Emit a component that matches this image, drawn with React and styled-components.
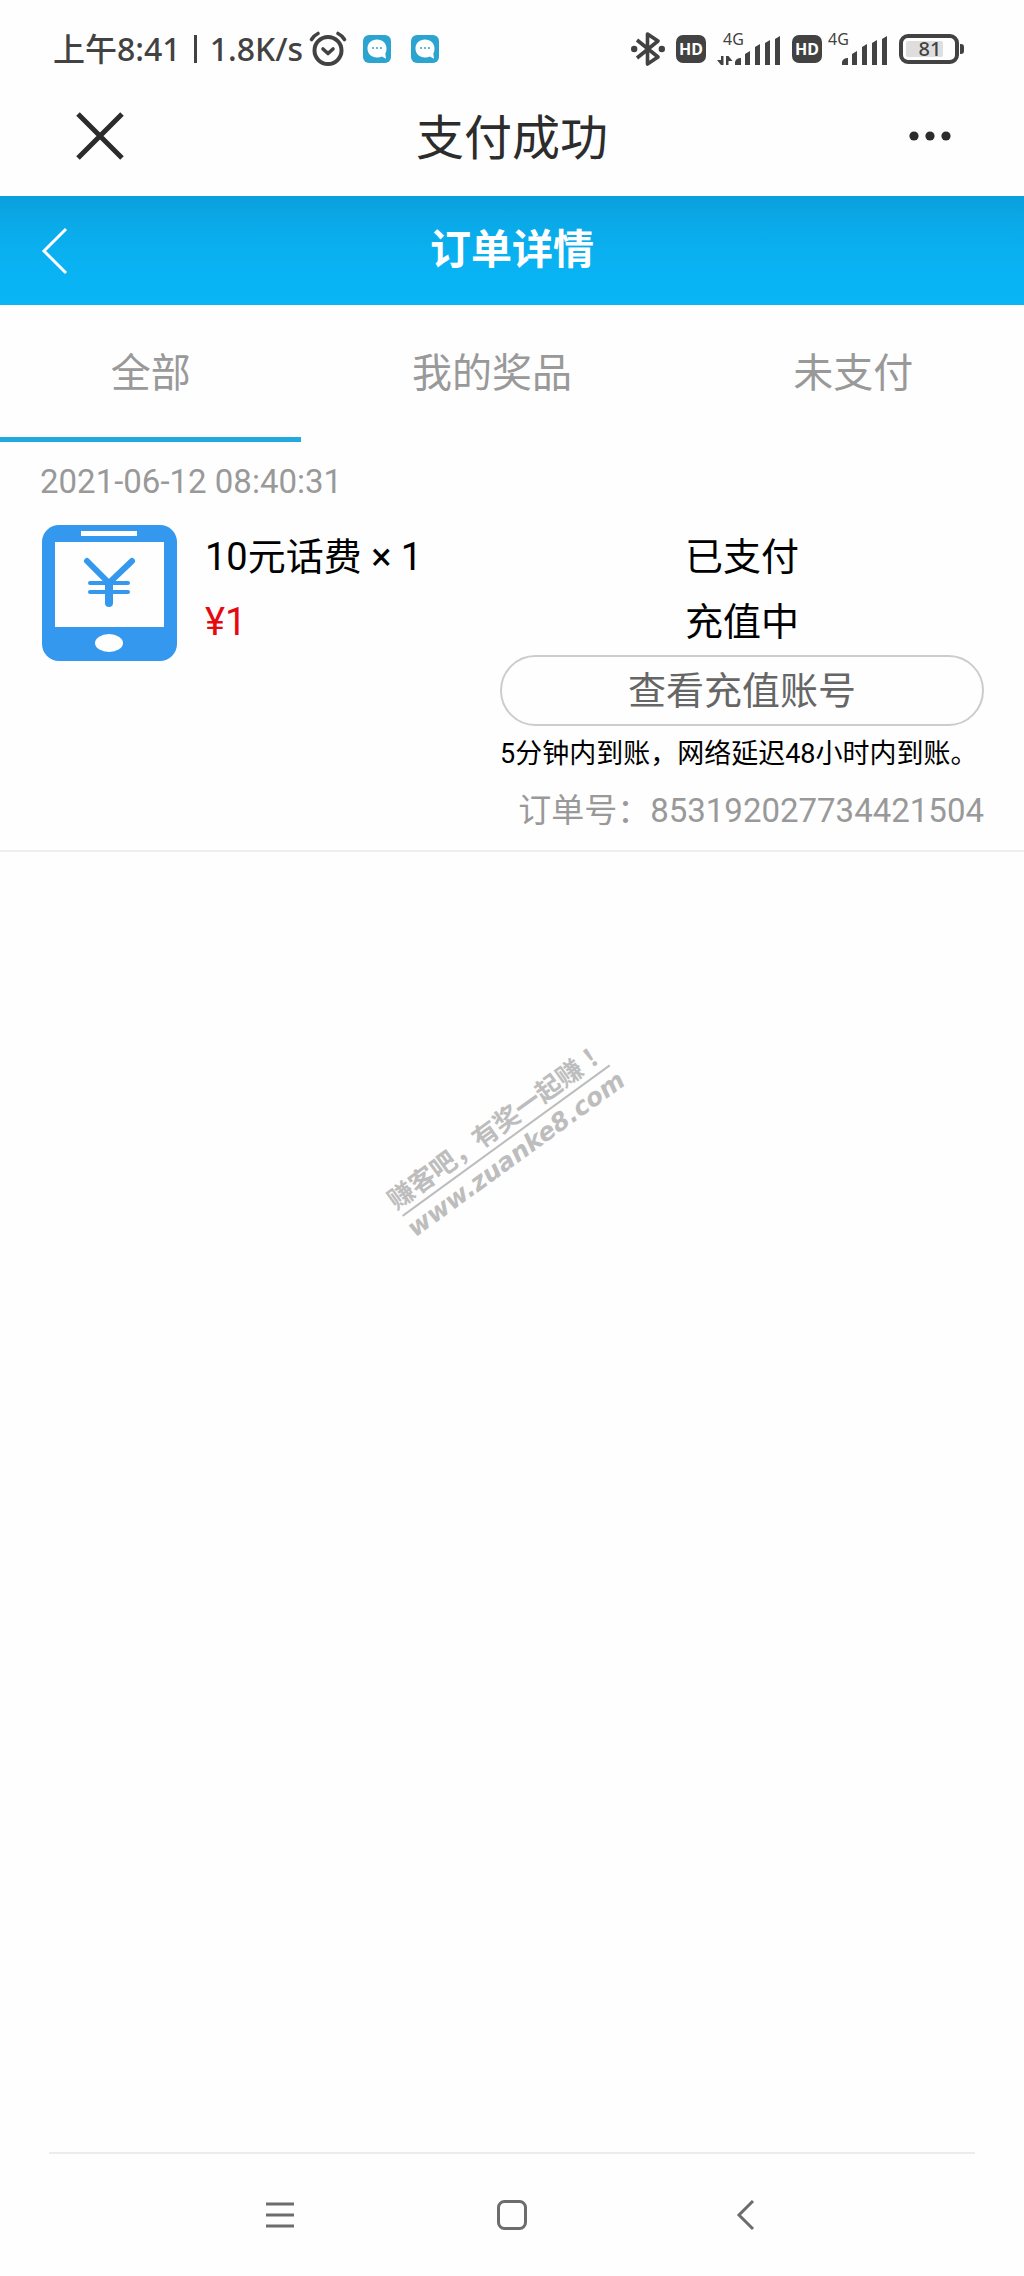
import React from "react";
import styled, { createGlobalStyle } from "styled-components";

const GlobalStyle = createGlobalStyle`
  *, *::before, *::after { box-sizing: border-box; }
  body {
    margin: 0;
    background: #fefefe;
    color: #000;
    font-family: Roboto, "Noto Sans CJK SC", sans-serif;
  }
  button {
    margin: 0;
    padding: 0;
    border: 0;
    background: none;
    color: inherit;
    font: inherit;
    cursor: pointer;
  }
  h1, h2, p { margin: 0; font-weight: 400; }
  svg { display: block; flex: none; }
`;

const Page = styled.div`
  position: relative;
  display: flex;
  flex-direction: column;
  min-height: 100vh;
`;

const StatusBar = styled.div`
  display: flex;
  align-items: center;
  justify-content: space-between;
  height: 76px;
  padding: 22px 59px 0 53px;
  color: #424242;
`;

const StatusGroup = styled.div`
  display: flex;
  align-items: center;
  gap: ${(p) => p.$gap}px;
`;

const StatusText = styled.span`
  font: 500 32px/40px "Noto Sans", "Noto Sans CJK SC", sans-serif;
  white-space: nowrap;
`;

const Divider = styled.span`
  width: 3px;
  height: 28px;
  margin: 0 13px;
  background: currentColor;
`;

const ChatIcons = styled.span`
  display: flex;
  gap: 20px;
  margin-left: 10px;
`;

const HdBadge = styled.span`
  width: 30px;
  height: 28px;
  border-radius: 7px;
  background: #424242;
  color: #fff;
  font: 700 16px/28px "Noto Sans", sans-serif;
  text-align: center;
`;

const TitleBar = styled.header`
  display: grid;
  grid-template-columns: 1fr auto 1fr;
  align-items: center;
  height: 120px;
  padding: 0 73px;
  color: #2c2c2c;
`;

const PageTitle = styled.h1`
  padding-top: 6px;
  font-size: 48px;
  line-height: 60px;
`;

const IconButton = styled.button`
  display: flex;
  justify-self: ${(p) => p.$side};
`;

const OrderHeader = styled.div`
  display: grid;
  grid-template-columns: 1fr auto 1fr;
  align-items: center;
  height: 109px;
  padding: 0 40px;
  background: linear-gradient(#0b9fdd, #0aabea 30%, #09b3f3 65%, #09b5f5);
  color: #fff;
`;

const OrderTitle = styled.h2`
  padding-bottom: 2px;
  font-size: 41px;
  font-weight: 700;
  line-height: 60px;
`;

const Tabs = styled.nav`
  display: flex;
  height: 137px;
`;

const Tab = styled.button`
  flex: 1 1 auto;
  padding-bottom: 2px;
  border-bottom: 5px solid ${(p) => (p.$active ? "#23a9de" : "transparent")};
  color: #999;
  font-size: 40px;
`;

const Order = styled.article`
  padding: 15px 40px 8px;
  border-bottom: 2px solid #eee;
`;

const OrderDate = styled.time`
  display: block;
  height: 68px;
  color: #999;
  font-size: 33px;
  line-height: 50px;
`;

const OrderBody = styled.div`
  display: flex;
  align-items: flex-start;
`;

const Product = styled.div`
  flex: 1;
  padding-left: 28px;
`;

const Line = styled.p`
  color: ${(p) => p.$color || "#000"};
  font-size: 38px;
  line-height: 65px;
`;

const Status = styled.div`
  flex: 0 0 484px;
  text-align: center;
`;

const AccountButton = styled.button`
  width: 100%;
  height: 71px;
  padding-bottom: 6px;
  border: 2px solid #ccc;
  border-radius: 36px;
  color: #666;
  font-size: 38px;
`;

const Note = styled.p`
  font-size: 27px;
  line-height: 56px;
  text-align: left;
  white-space: nowrap;
`;

const OrderNumber = styled.p`
  padding-bottom: 2px;
  color: #999;
  font-size: 33px;
  line-height: 58px;
  text-align: right;
  white-space: nowrap;
`;

const Watermark = styled.div`
  position: absolute;
  top: 1139px;
  left: 505px;
  width: 256px;
  color: #bdbdbd;
  white-space: nowrap;
  transform: translate(-50%, -50%) rotate(-36deg);
`;

const Slogan = styled.div`
  display: flex;
  justify-content: center;
  border-bottom: 2px solid #bdbdbd;
  font: 700 26px/36px "Noto Sans CJK SC", sans-serif;
`;

const FullWidthMark = styled.span`
  font-family: "Noto Sans CJK TC", sans-serif;
`;

const Site = styled.div`
  display: flex;
  justify-content: center;
  font: italic 700 25px/32px "DejaVu Sans", sans-serif;
`;

const SystemNav = styled.nav`
  display: flex;
  align-items: center;
  justify-content: space-between;
  height: 124px;
  margin: auto 49px 0;
  padding: 0 21%;
  border-top: 2px solid #ececec;
  color: #6c6c6c;
`;

const NavButton = styled.button`
  display: flex;
`;

function AlarmIcon() {
  return (
    <svg width="38" height="36" viewBox="0 0 38 36" fill="none" stroke="currentColor" strokeWidth="4" strokeLinecap="round">
      <circle cx="19" cy="19.500" r="13.500" />
      <path d="M2.500 8.500C4 6 6.500 3.700 9 2.500M35.500 8.500C34 6 31.500 3.700 29 2.500" strokeWidth="3.600" />
      <path d="M14 18l5 4.500 5-4.500" strokeWidth="3.600" strokeLinejoin="round" />
    </svg>
  );
}

function ChatIcon() {
  return (
    <svg width="28" height="28" viewBox="0 0 28 28">
      <rect width="28" height="28" rx="6" fill="#2ba5d0" />
      <path d="M14 4.500c-5.500 0-9.500 3.800-9.500 9s4 9 9.500 9c1.800 0 3.400-.3 4.800-1.100l4.200 2.300-.7-5.200c.8-1.400 1.200-3 1.200-5 0-5.200-4-9-9.500-9z" fill="#fff" />
      <g fill="#2ba5d0">
        <circle cx="10" cy="13" r="1" />
        <circle cx="14" cy="13" r="1" />
        <circle cx="18" cy="13" r="1" />
      </g>
    </svg>
  );
}

function BluetoothIcon() {
  return (
    <svg width="34" height="36" viewBox="0 0 34 36" fill="none" stroke="currentColor" strokeWidth="3.600" strokeLinejoin="round">
      <path d="M6 9l21 17-10.500 7V3L27 10 6 27" />
      <g fill="currentColor" stroke="none">
        <circle cx="3.200" cy="18" r="3.200" />
        <circle cx="30.800" cy="18" r="3.200" />
      </g>
    </svg>
  );
}

function SignalIcon({ arrows }) {
  return (
    <svg width={arrows ? 64 : 60} height="46" viewBox={arrows ? "0 -6 64 46" : "4 -6 60 46"} fill="currentColor">
      <text x={arrows ? 6 : 4} y="13" fontFamily="Noto Sans, sans-serif" fontSize="16">4G</text>
      {arrows && (
        <path d="M4 24h2.500v9H4L0 28h4zM9 24h2.500l4 5h-4v4H9z" />
      )}
      <path d="M18 33v-3q1-4 6-4v7zM28 33V22l5-3v14zM38 33V15l5-3v21zM48 33v-22l5-3v25zM58 33V7l5-3v29z" />
    </svg>
  );
}

function BatteryIcon() {
  return (
    <svg width="66" height="30" viewBox="0 0 66 30">
      <rect x="2" y="2" width="56" height="26" rx="7" fill="none" stroke="#424242" strokeWidth="4" />
      <rect x="7" y="7" width="37" height="16" rx="2" fill="#dedede" />
      <path d="M61 10h1q3 0 3 3v4q0 3-3 3h-1z" fill="#424242" />
      <text x="31" y="22" textAnchor="middle" fontFamily="Noto Sans, sans-serif" fontSize="20" fontWeight="500" fill="#424242">81</text>
    </svg>
  );
}

function CloseIcon() {
  return (
    <svg width="54" height="54" viewBox="0 0 54 54" fill="none" stroke="currentColor" strokeWidth="5">
      <path d="M5 5l44 44M49 5L5 49" />
    </svg>
  );
}

function MoreIcon() {
  return (
    <svg width="42" height="10" viewBox="0 0 42 10" fill="currentColor">
      <circle cx="5" cy="5" r="4.600" />
      <circle cx="21" cy="5" r="4.600" />
      <circle cx="37" cy="5" r="4.600" />
    </svg>
  );
}

function BackIcon() {
  return (
    <svg width="28" height="48" viewBox="0 0 28 48" fill="none" stroke="currentColor" strokeWidth="3">
      <path d="M26 2L4 24l22 22" />
    </svg>
  );
}

function PhoneIcon() {
  return (
    <svg width="137" height="136" viewBox="0 0 137 136">
      <rect x="2" width="135" height="136" rx="17" fill="#3598ef" />
      <g fill="#fefefe">
        <rect x="41" y="6" width="56" height="5" />
        <rect x="15" y="17" width="109" height="85" />
        <ellipse cx="69" cy="118" rx="14" ry="9" />
      </g>
      <g fill="none" stroke="#3598ef" strokeLinecap="round">
        <path d="M47 36l22 22 23-22" strokeWidth="6" />
        <path d="M69 58v20" strokeWidth="8" />
        <path d="M50 58h38M50 67h38" strokeWidth="4" />
      </g>
    </svg>
  );
}

export default function App() {
  return (
    <Page>
      <GlobalStyle />
      <StatusBar>
        <StatusGroup $gap={6}>
          <StatusGroup $gap={0}>
            <StatusText>上午8:41</StatusText>
            <Divider />
            <StatusText>1.8K/s</StatusText>
          </StatusGroup>
          <AlarmIcon />
          <ChatIcons>
            <ChatIcon />
            <ChatIcon />
          </ChatIcons>
        </StatusGroup>
        <StatusGroup $gap={11}>
          <BluetoothIcon />
          <HdBadge>HD</HdBadge>
          <SignalIcon arrows />
          <StatusGroup $gap={6}>
            <HdBadge>HD</HdBadge>
            <SignalIcon />
          </StatusGroup>
          <BatteryIcon />
        </StatusGroup>
      </StatusBar>

      <TitleBar>
        <IconButton $side="start" aria-label="关闭"><CloseIcon /></IconButton>
        <PageTitle>支付成功</PageTitle>
        <IconButton $side="end" aria-label="更多"><MoreIcon /></IconButton>
      </TitleBar>

      <OrderHeader>
        <IconButton $side="start" aria-label="返回"><BackIcon /></IconButton>
        <OrderTitle>订单详情</OrderTitle>
      </OrderHeader>

      <Tabs>
        <Tab $active>全部</Tab>
        <Tab>我的奖品</Tab>
        <Tab>未支付</Tab>
      </Tabs>

      <Order>
        <OrderDate dateTime="2021-06-12T08:40:31">2021-06-12 08:40:31</OrderDate>
        <OrderBody>
          <PhoneIcon />
          <Product>
            <Line>10元话费 × 1</Line>
            <Line $color="#e60a10">¥1</Line>
          </Product>
          <Status>
            <Line>已支付</Line>
            <Line>充值中</Line>
            <AccountButton>查看充值账号</AccountButton>
            <Note>5分钟内到账，网络延迟48小时内到账。</Note>
            <OrderNumber>订单号：853192027734421504</OrderNumber>
          </Status>
        </OrderBody>
      </Order>

      <Watermark>
        <Slogan>赚客吧，有奖一起赚<FullWidthMark>！</FullWidthMark></Slogan>
        <Site>www.zuanke8.com</Site>
      </Watermark>

      <SystemNav>
        <NavButton aria-label="菜单">
          <svg width="32" height="32" viewBox="0 0 32 32" stroke="currentColor" strokeWidth="3">
            <path d="M2 5h28M2 16h28M2 27h28" />
          </svg>
        </NavButton>
        <NavButton aria-label="主页">
          <svg width="32" height="32" viewBox="0 0 32 32" fill="none" stroke="currentColor" strokeWidth="3">
            <rect x="2.500" y="2.500" width="27" height="27" rx="6" />
          </svg>
        </NavButton>
        <NavButton aria-label="后退">
          <svg width="32" height="32" viewBox="0 0 32 32" fill="none" stroke="currentColor" strokeWidth="3">
            <path d="M25 2L11 16l14 14" />
          </svg>
        </NavButton>
      </SystemNav>
    </Page>
  );
}
